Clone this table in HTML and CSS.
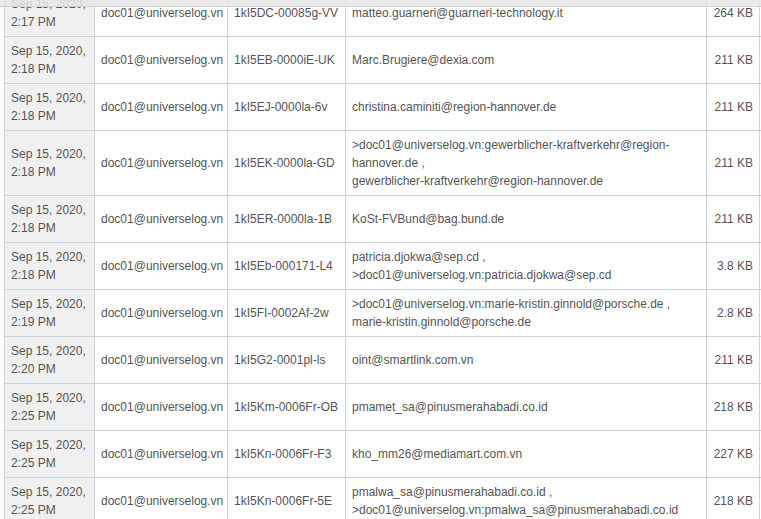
FILE: index.html
```html
<!DOCTYPE html>
<html lang="en">
  <head>
    <meta charset="UTF-8" />
    <title>Mail log</title>
    <link rel="stylesheet" href="styles.css">
  </head>
  <body>
    <div class="head-strip"></div>
    <table class="log">
      <colgroup>
        <col class="c-date" />
        <col class="c-user" />
        <col class="c-id" />
        <col class="c-to" />
        <col class="c-size" />
        <col class="c-more" />
      </colgroup>
      <tbody>
        <tr>
          <td class="date">Sep 15, 2020, 2:17 PM</td>
          <td>doc01@universelog.vn</td>
          <td>1kI5DC-00085g-VV</td>
          <td>matteo.guarneri@guarneri-technology.it</td>
          <td class="size">264 KB</td>
          <td></td>
        </tr>
        <tr>
          <td class="date">Sep 15, 2020, 2:18 PM</td>
          <td>doc01@universelog.vn</td>
          <td>1kI5EB-0000iE-UK</td>
          <td>Marc.Brugiere@dexia.com</td>
          <td class="size">211 KB</td>
          <td></td>
        </tr>
        <tr>
          <td class="date">Sep 15, 2020, 2:18 PM</td>
          <td>doc01@universelog.vn</td>
          <td>1kI5EJ-0000la-6v</td>
          <td>christina.caminiti@region-hannover.de</td>
          <td class="size">211 KB</td>
          <td></td>
        </tr>
        <tr>
          <td class="date">Sep 15, 2020, 2:18 PM</td>
          <td>doc01@universelog.vn</td>
          <td>1kI5EK-0000la-GD</td>
          <td>&gt;doc01@universelog.vn:gewerblicher-kraftverkehr@region-hannover.de ,<br>gewerblicher-kraftverkehr@region-hannover.de</td>
          <td class="size">211 KB</td>
          <td></td>
        </tr>
        <tr>
          <td class="date">Sep 15, 2020, 2:18 PM</td>
          <td>doc01@universelog.vn</td>
          <td>1kI5ER-0000la-1B</td>
          <td>KoSt-FVBund@bag.bund.de</td>
          <td class="size">211 KB</td>
          <td></td>
        </tr>
        <tr>
          <td class="date">Sep 15, 2020, 2:18 PM</td>
          <td>doc01@universelog.vn</td>
          <td>1kI5Eb-000171-L4</td>
          <td>patricia.djokwa@sep.cd ,<br>&gt;doc01@universelog.vn:patricia.djokwa@sep.cd</td>
          <td class="size">3.8 KB</td>
          <td></td>
        </tr>
        <tr>
          <td class="date">Sep 15, 2020, 2:19 PM</td>
          <td>doc01@universelog.vn</td>
          <td>1kI5FI-0002Af-2w</td>
          <td>&gt;doc01@universelog.vn:marie-kristin.ginnold@porsche.de ,<br>marie-kristin.ginnold@porsche.de</td>
          <td class="size">2.8 KB</td>
          <td></td>
        </tr>
        <tr>
          <td class="date">Sep 15, 2020, 2:20 PM</td>
          <td>doc01@universelog.vn</td>
          <td>1kI5G2-0001pl-ls</td>
          <td>oint@smartlink.com.vn</td>
          <td class="size">211 KB</td>
          <td></td>
        </tr>
        <tr>
          <td class="date">Sep 15, 2020, 2:25 PM</td>
          <td>doc01@universelog.vn</td>
          <td>1kI5Km-0006Fr-OB</td>
          <td>pmamet_sa@pinusmerahabadi.co.id</td>
          <td class="size">218 KB</td>
          <td></td>
        </tr>
        <tr>
          <td class="date">Sep 15, 2020, 2:25 PM</td>
          <td>doc01@universelog.vn</td>
          <td>1kI5Kn-0006Fr-F3</td>
          <td>kho_mm26@mediamart.com.vn</td>
          <td class="size">227 KB</td>
          <td></td>
        </tr>
        <tr>
          <td class="date">Sep 15, 2020, 2:25 PM</td>
          <td>doc01@universelog.vn</td>
          <td>1kI5Kn-0006Fr-5E</td>
          <td>pmalwa_sa@pinusmerahabadi.co.id ,<br>&gt;doc01@universelog.vn:pmalwa_sa@pinusmerahabadi.co.id</td>
          <td class="size">218 KB</td>
          <td></td>
        </tr>
      </tbody>
    </table>
  </body>
</html>
```

FILE: styles.css
```css
body {
  margin: 0;
  background: #fff;
  font-family: "Liberation Sans", Arial, sans-serif;
  font-size: 12px;
  color: #555;
  overflow: hidden;
}
.head-strip {
  position: absolute;
  top: 0;
  left: 0;
  right: 0;
  height: 6px;
  background: rgba(230, 230, 230, 0.85);
  border-bottom: 1px solid #d2d2d2;
}
.log {
  margin: -10px 0 0 4px;
  table-layout: fixed;
  border-collapse: separate;
  border-spacing: 0;
  border-left: 1px solid #c9d5d9;
  width: 856px;
}
.c-date {
  width: 90px;
}
.c-user {
  width: 133px;
}
.c-id {
  width: 118px;
}
.c-to {
  width: 361px;
}
.c-size {
  width: 53px;
}
.c-more {
  width: 100px;
}
.log td {
  padding: 5px 6px;
  line-height: 18px;
  vertical-align: middle;
  border-right: 1px solid #c9d5d9;
  border-bottom: 1px solid #c9d5d9;
}
.log td.date {
  background: #f0f0f0;
}
.log td.size {
  text-align: right;
  white-space: nowrap;
}
```
